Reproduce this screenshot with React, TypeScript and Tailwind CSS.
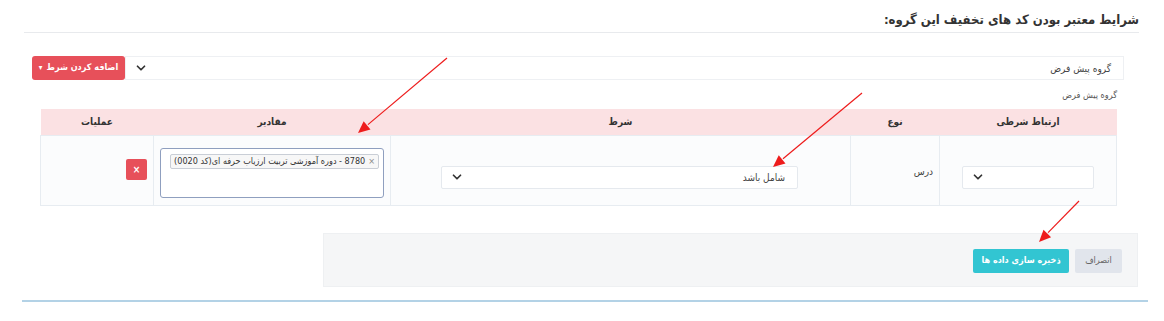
import { ChevronDown } from 'lucide-react'

const font = { fontFamily: '"DejaVu Sans Condensed", "DejaVu Sans", Tahoma, sans-serif' }

function SelectBox({ className, label }: { className: string; label?: string }) {
  return (
    <div
      className={`flex items-center justify-between rounded-[2px] border border-[#e5e9ee] bg-white pl-2 pr-2 text-[10px] text-[#444] ${className}`}
    >
      <span>{label}</span>
      <ChevronDown aria-hidden="true" className="size-3.5 text-[#333]" strokeWidth={3} />
    </div>
  )
}

function Arrows() {
  const lines = [
    { x1: 447, y1: 58, x2: 358, y2: 133 },
    { x1: 862, y1: 93, x2: 773, y2: 167 },
    { x1: 1079, y1: 201, x2: 1039, y2: 242 },
  ]
  return (
    <svg className="pointer-events-none absolute inset-0" height="321" width="1164">
      {lines.map((l) => {
        const angle = Math.atan2(l.y2 - l.y1, l.x2 - l.x1)
        const len = 13
        const spread = 0.42
        const bx = l.x2 - len * Math.cos(angle)
        const by = l.y2 - len * Math.sin(angle)
        const p1 = `${l.x2 - len * Math.cos(angle - spread)},${l.y2 - len * Math.sin(angle - spread)}`
        const p2 = `${l.x2 - len * Math.cos(angle + spread)},${l.y2 - len * Math.sin(angle + spread)}`
        return (
          <g key={l.x1}>
            <line stroke="#ee1c1c" strokeWidth="1.2" x1={l.x1} x2={bx} y1={l.y1} y2={by} />
            <polygon fill="#ee1c1c" points={`${l.x2},${l.y2} ${p1} ${p2}`} />
          </g>
        )
      })}
    </svg>
  )
}

export default function App() {
  return (
    <div className="relative h-[321px] w-[1164px] overflow-hidden bg-white text-[#333]" dir="rtl" style={font}>
      <div className="ml-[24px] mr-[25px] flex h-[33px] items-end border-b border-[#e8eaed] pb-[6px]">
        <h3 className="whitespace-nowrap text-[13px] font-bold leading-none text-[#333]">شرایط معتبر بودن کد های تخفیف این گروه:</h3>
      </div>

      <div className="ml-[32px] mr-[40px] mt-[23px] flex h-[24px]">
        <div className="flex flex-1 items-center justify-between border border-[#eef0f3] bg-white pl-2 pr-3 text-[10px] text-[#444]">
          <span>گروه پیش فرض</span>
          <ChevronDown aria-hidden="true" className="size-3.5 text-[#333]" strokeWidth={3} />
        </div>
        <button
          className="flex w-[93px] items-center justify-center gap-1 whitespace-nowrap rounded-[3px] bg-[#e7505a] text-[9px] font-bold text-white"
          type="button"
        >
          <span>اضافه کردن شرط</span>
          <span className="text-[8px]">▾</span>
        </button>
      </div>

      <p className="mr-[47px] mt-[8px] h-[14px] text-[9px] leading-[14px] text-[#555]">گروه پیش فرض</p>

      <table className="ml-[41px] mr-[47px] mt-[7px] w-[1076px] table-fixed border-collapse text-[10px]">
        <colgroup>
          <col className="w-[177px]" />
          <col className="w-[89px]" />
          <col className="w-[460px]" />
          <col className="w-[237px]" />
          <col className="w-[113px]" />
        </colgroup>
        <thead>
          <tr className="h-[26px] bg-[#fbe1e3] text-[#333]">
            <th className="font-bold">ارتباط شرطی</th>
            <th className="font-bold">نوع</th>
            <th className="font-bold">شرط</th>
            <th className="font-bold">مقادیر</th>
            <th className="font-bold">عملیات</th>
          </tr>
        </thead>
        <tbody>
          <tr className="h-[70px] bg-[#fbfcfd] align-top">
            <td className="border border-[#e7ecf1] pr-[22px] pt-[30px]">
              <SelectBox className="h-[23px] w-[132px]" />
            </td>
            <td className="border border-[#e7ecf1] pr-[6px] pt-[28px] text-right text-[10px] text-[#444]">درس</td>
            <td className="border border-[#e7ecf1] pr-[52px] pt-[30px]">
              <SelectBox className="h-[23px] w-[357px] pr-3" label="شامل باشد" />
            </td>
            <td className="border border-[#e7ecf1] pr-[6px] pt-[12px]">
              <div className="h-[50px] w-[224px] rounded-[3px] border border-[#8f9fbf] bg-white pr-[4px] pt-[4px]">
                <span className="inline-flex h-[15px] items-center gap-[3px] whitespace-nowrap rounded-[2px] border border-[#c9ced6] bg-[#f7f7f7] px-[3px] text-[9px] leading-none text-[#333]">
                  <span className="text-[#888]">×</span>
                  <span>8780 - دوره آموزشی تربیت ارزیاب حرفه ای(کد 0020)</span>
                </span>
              </div>
            </td>
            <td className="border border-[#e7ecf1] pr-[6px] pt-[23px]">
              <button
                className="flex h-[21px] w-[21px] items-center justify-center rounded-[2px] bg-[#e7505a] text-[10px] font-bold text-white"
                type="button"
              >
                ×
              </button>
            </td>
          </tr>
        </tbody>
      </table>

      <div className="ml-[323px] mr-[26px] mt-[27px] flex h-[54px] items-start gap-[6px] border border-[#eef0f2] bg-[#f5f6f7] pr-[15px] pt-[15px]">
        <button className="h-[24px] w-[47px] whitespace-nowrap rounded-[2px] bg-[#e1e5ec] text-[9px] text-[#666]" type="button">
          انصراف
        </button>
        <button className="h-[24px] w-[96px] whitespace-nowrap rounded-[2px] bg-[#32c5d2] text-[9px] font-bold text-white" type="button">
          ذخیره سازی داده ها
        </button>
      </div>

      <div className="ml-[22px] mr-[16px] mt-[13px] h-[2px] bg-[#b3d2e6]" />

      <Arrows />
    </div>
  )
}
